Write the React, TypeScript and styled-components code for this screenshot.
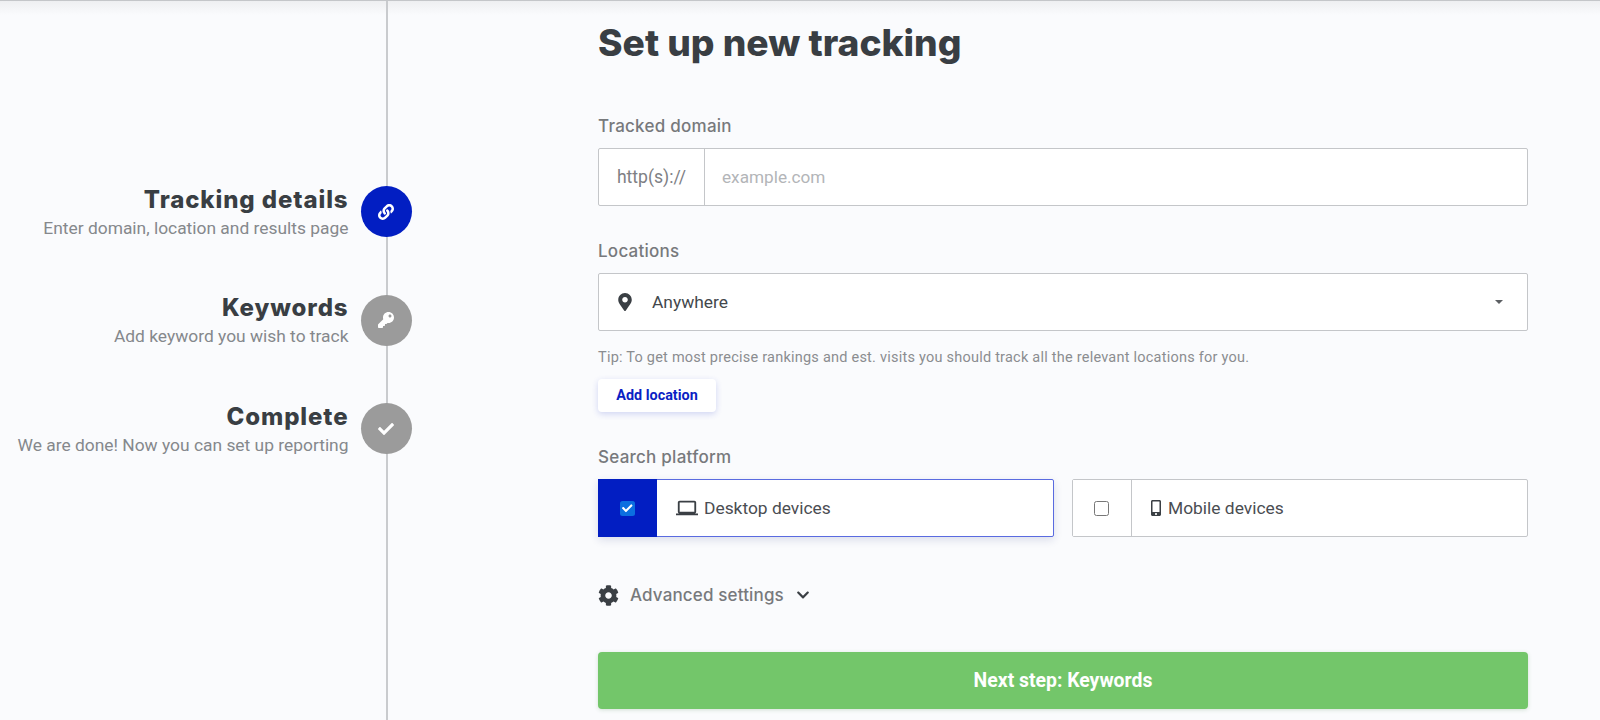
import React from 'react';
import styled, { createGlobalStyle } from 'styled-components';
import { FaCheck, FaChevronDown, FaCog, FaKey, FaLink, FaMapMarkerAlt, FaMobileAlt } from 'react-icons/fa';
import { MdOutlineLaptop } from 'react-icons/md';

const GlobalStyle = createGlobalStyle`
  * { box-sizing: border-box; }
  html, body { margin: 0; height: 720px; overflow: hidden; background: #fafbfd; }
  body { font-family: Roboto, "Liberation Sans", sans-serif; color: #3a3f44; }
`;

const Page = styled.div`
  display: flex;
  height: 720px;
  border-top: 1px solid #c4c6c9;
  background: linear-gradient(#eeeff1, #fafbfd 14px);
`;

const Sidebar = styled.aside`
  flex: none;
  width: 388px;
  padding-top: 185px;
  border-right: 2px solid #c9cbce;
  display: flex;
  flex-direction: column;
  gap: 57.5px;
`;

const Step = styled.div`
  display: flex;
  justify-content: flex-end;
  align-items: center;
  gap: 12px;
  margin-right: -25.5px;
  height: 51px;
`;

const StepText = styled.div`
  text-align: right;
  padding-top: 4px;
`;

const StepTitle = styled.div`
  font-family: Inter, "Liberation Sans", sans-serif;
  font-weight: 800;
  font-size: 24px;
  letter-spacing: 0.9px;
  line-height: 28px;
  color: #393e43;
`;

const StepHint = styled.div`
  font-size: 17.4px;
  line-height: 28px;
  color: #85888c;
`;

const StepCircle = styled.div<{ $active?: boolean }>`
  flex: none;
  width: 51px;
  height: 51px;
  border-radius: 50%;
  display: flex;
  align-items: center;
  justify-content: center;
  color: #fff;
  font-size: 16px;
  background: ${p => (p.$active ? '#021ec2' : '#9b9b9b')};
`;

const Main = styled.main`
  flex: none;
  width: 930px;
  margin-left: 210px;
`;

const Heading = styled.h1`
  margin: 19px 0 0;
  font-family: Inter, "Liberation Sans", sans-serif;
  font-weight: 800;
  font-size: 37.2px;
  line-height: 46px;
  color: #393e43;
`;

const Label = styled.div`
  font-family: Inter, "Liberation Sans", sans-serif;
  font-weight: 500;
  font-size: 17px;
  letter-spacing: 0.25px;
  line-height: 21px;
  color: #77797c;
  margin-bottom: 11px;
`;

const Field = styled.div<{ $top: number }>`
  margin-top: ${p => p.$top}px;
`;

const InputGroup = styled.div`
  display: flex;
  height: 58px;
  background: #fff;
  border: 1px solid #c4c6c9;
  border-radius: 2px;
`;

const Prefix = styled.div`
  flex: none;
  width: 106px;
  display: flex;
  align-items: center;
  justify-content: center;
  border-right: 1px solid #c4c6c9;
  font-size: 17.6px;
  color: #7e8084;
`;

const Placeholder = styled.div`
  display: flex;
  align-items: center;
  padding-left: 17px;
  font-size: 17.2px;
  color: #b3b5b8;
`;

const Select = styled.div`
  display: flex;
  align-items: center;
  height: 58px;
  padding: 0 24px 0 17px;
  background: #fff;
  border: 1px solid #c4c6c9;
  border-radius: 2px;
  font-size: 17.4px;
  color: #43474c;
  svg { font-size: 18px; color: #3a3f44; margin-right: 18px; }
`;

const Caret = styled.span`
  margin-left: auto;
  width: 0;
  height: 0;
  border-left: 4px solid transparent;
  border-right: 4px solid transparent;
  border-top: 4px solid #5c5f63;
`;

const Tip = styled.div`
  margin-top: 17px;
  font-size: 14.5px;
  line-height: 20px;
  letter-spacing: 0.23px;
  color: #8b8d90;
`;

const SmallButton = styled.div`
  width: 118px;
  height: 33px;
  margin-top: 11px;
  display: flex;
  align-items: center;
  justify-content: center;
  background: #fff;
  border-radius: 4px;
  box-shadow: 0 2px 6px rgba(40, 60, 200, 0.2);
  font-size: 14.4px;
  font-weight: 700;
  color: #0a1fc4;
`;

const Platforms = styled.div`
  display: flex;
  gap: 18px;
`;

const PlatformCard = styled.div<{ $selected?: boolean }>`
  flex: 1;
  display: flex;
  height: 58px;
  background: #fff;
  border: 1px solid ${p => (p.$selected ? '#5a6be0' : '#c4c6c9')};
  border-radius: 2px;
  box-shadow: ${p => (p.$selected ? '0 3px 8px rgba(30, 40, 120, 0.14)' : 'none')};
`;

const CheckCell = styled.div<{ $selected?: boolean }>`
  flex: none;
  width: 59px;
  margin: ${p => (p.$selected ? '-1px 0 -1px -1px' : '0')};
  padding-right: ${p => (p.$selected ? '0' : '1px')};
  display: flex;
  align-items: center;
  justify-content: center;
  background: ${p => (p.$selected ? '#021ec2' : '#fff')};
  border-right: ${p => (p.$selected ? 'none' : '1px solid #c4c6c9')};
`;

const CheckBox = styled.span<{ $checked?: boolean }>`
  width: 15px;
  height: 15px;
  border-radius: 2.5px;
  display: flex;
  align-items: center;
  justify-content: center;
  font-size: 10.5px;
  color: #fff;
  background: ${p => (p.$checked ? '#0b6fe0' : '#fff')};
  border: ${p => (p.$checked ? 'none' : '1px solid #777')};
`;

const PlatformName = styled.div<{ $gap: number; $pad: number }>`
  display: flex;
  align-items: center;
  gap: ${p => p.$gap}px;
  padding-left: ${p => p.$pad}px;
  font-size: 17.4px;
  color: #4a4d52;
  svg { color: #3a3f44; }
`;

const Advanced = styled.div`
  display: flex;
  align-items: center;
  margin-top: 46px;
  height: 24px;
  font-family: Inter, "Liberation Sans", sans-serif;
  font-weight: 500;
  font-size: 17px;
  letter-spacing: 0.15px;
  color: #77797c;
`;

const AdvancedGear = styled(FaCog)`
  font-size: 21px;
  color: #3a3f44;
  margin-right: 11px;
`;

const AdvancedChevron = styled(FaChevronDown)`
  font-size: 14px;
  color: #3a3f44;
  margin-left: 12px;
`;

const NextButton = styled.div`
  margin-top: 45px;
  height: 57px;
  display: flex;
  align-items: center;
  justify-content: center;
  background: #73c66a;
  border-radius: 4px;
  box-shadow: 0 1px 4px rgba(60, 120, 60, 0.2);
  font-size: 19.4px;
  font-weight: 700;
  color: #fff;
`;

const steps = [
  { title: 'Tracking details', hint: 'Enter domain, location and results page', icon: <FaLink />, active: true },
  { title: 'Keywords', hint: 'Add keyword you wish to track', icon: <FaKey /> },
  { title: 'Complete', hint: 'We are done! Now you can set up reporting', icon: <FaCheck /> },
];

export default function App() {
  return (
    <>
      <GlobalStyle />
      <Page>
        <Sidebar>
          {steps.map(step => (
            <Step key={step.title}>
              <StepText>
                <StepTitle>{step.title}</StepTitle>
                <StepHint>{step.hint}</StepHint>
              </StepText>
              <StepCircle $active={step.active}>{step.icon}</StepCircle>
            </Step>
          ))}
        </Sidebar>
        <Main>
          <Heading>Set up new tracking</Heading>
          <Field $top={50}>
            <Label>Tracked domain</Label>
            <InputGroup>
              <Prefix>http(s)://</Prefix>
              <Placeholder>example.com</Placeholder>
            </InputGroup>
          </Field>
          <Field $top={35}>
            <Label>Locations</Label>
            <Select>
              <FaMapMarkerAlt />
              Anywhere
              <Caret />
            </Select>
            <Tip>Tip: To get most precise rankings and est. visits you should track all the relevant locations for you.</Tip>
            <SmallButton>Add location</SmallButton>
          </Field>
          <Field $top={35}>
            <Label>Search platform</Label>
            <Platforms>
              <PlatformCard $selected>
                <CheckCell $selected>
                  <CheckBox $checked><FaCheck /></CheckBox>
                </CheckCell>
                <PlatformName $gap={6} $pad={19}>
                  <MdOutlineLaptop size={22} />
                  Desktop devices
                </PlatformName>
              </PlatformCard>
              <PlatformCard>
                <CheckCell>
                  <CheckBox />
                </CheckCell>
                <PlatformName $gap={4} $pad={16}>
                  <FaMobileAlt size={16} />
                  Mobile devices
                </PlatformName>
              </PlatformCard>
            </Platforms>
          </Field>
          <Advanced>
            <AdvancedGear />
            Advanced settings
            <AdvancedChevron />
          </Advanced>
          <NextButton>Next step: Keywords</NextButton>
        </Main>
      </Page>
    </>
  );
}
